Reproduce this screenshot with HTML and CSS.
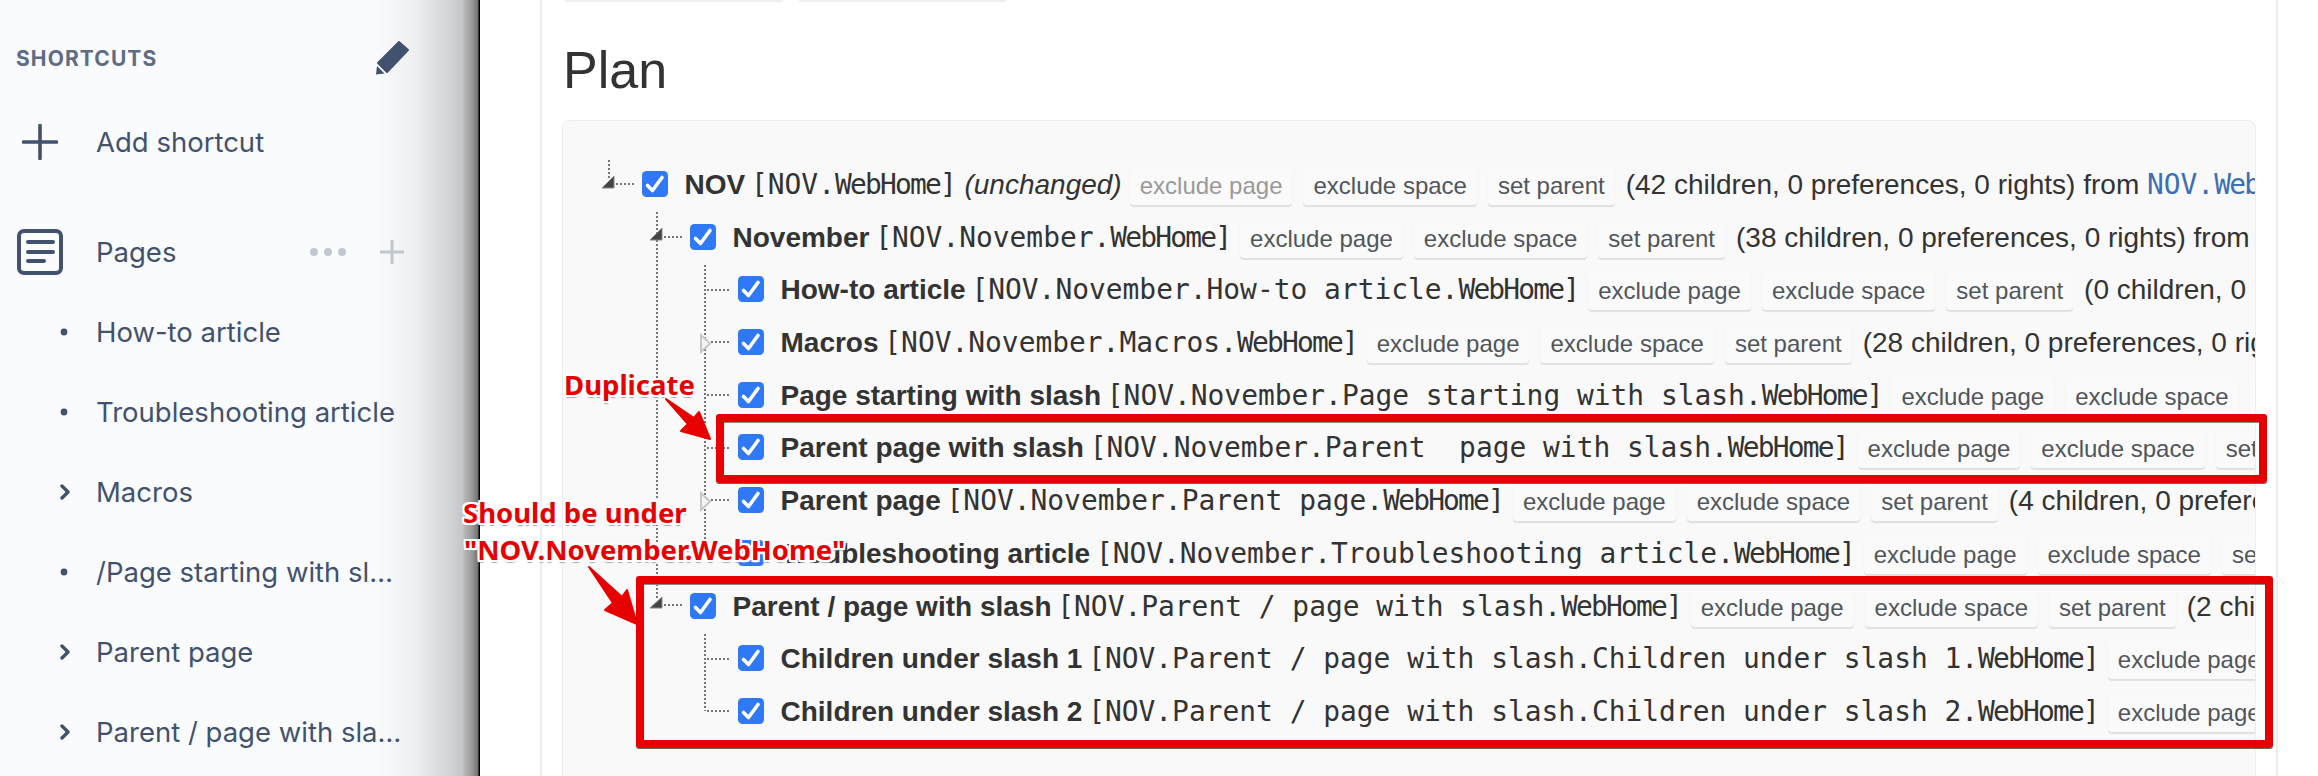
FILE: index.html
```html
<!DOCTYPE html>
<html lang="en">
<head>
<meta charset="utf-8">
<title>Plan</title>
<link rel="stylesheet" href="styles.css">
</head>
<body>
<svg class="defs" width="0" height="0" aria-hidden="true">
  <symbol id="checkbox" viewBox="0 0 26 26">
    <rect width="26" height="26" rx="4.5" fill="#2f78f6"/>
    <path d="M5.5 14.5l5 5L20 6.5" fill="none" stroke="#fff" stroke-width="3.6" stroke-linecap="round" stroke-linejoin="round"/>
  </symbol>
  <symbol id="chevron" viewBox="0 0 10 16">
    <path d="M2 2l6 6-6 6" fill="none" stroke="currentColor" stroke-width="3.4" stroke-linecap="round" stroke-linejoin="round"/>
  </symbol>
  <symbol id="bullet" viewBox="0 0 10 16">
    <circle cx="4" cy="8" r="3.4" fill="currentColor"/>
  </symbol>
</svg>

<div class="app">
  <aside class="sidebar">
    <div class="side-head">
      <span class="side-title">SHORTCUTS</span>
      <svg class="pencil" width="34" height="35" viewBox="0 0 34 35">
        <path d="M23 2l9 8-21 22-9-9z" fill="#42526e" stroke="#42526e" stroke-width="2" stroke-linejoin="round"/>
        <path d="M1 26l7.500 7.500L0 34.500z" fill="#42526e"/>
      </svg>
    </div>
    <div class="nav-row">
      <span class="nav-icon">
        <svg width="36" height="36" viewBox="0 0 36 36"><path d="M18 1.500v33M1.500 18h33" fill="none" stroke="#42526e" stroke-width="3.600" stroke-linecap="round"/></svg>
      </span>
      <span>Add shortcut</span>
    </div>
    <div class="nav-row nav-pages">
      <span class="nav-icon">
        <svg width="46" height="46" viewBox="0 0 46 46">
          <rect x="2" y="2" width="42" height="42" rx="5" fill="none" stroke="#42526e" stroke-width="4"/>
          <path d="M11 13h25M11 23h25M11 32h16" fill="none" stroke="#42526e" stroke-width="4" stroke-linecap="round"/>
        </svg>
      </span>
      <span>Pages</span>
      <span class="page-tools">
        <svg width="36" height="8" viewBox="0 0 36 8"><circle cx="4" cy="4" r="4" fill="#c1c7d0"/><circle cx="18" cy="4" r="4" fill="#c1c7d0"/><circle cx="32" cy="4" r="4" fill="#c1c7d0"/></svg>
        <svg width="24" height="24" viewBox="0 0 24 24"><path d="M12 1v22M1 12h22" fill="none" stroke="#c1c7d0" stroke-width="3" stroke-linecap="round"/></svg>
      </span>
    </div>
    <ul class="page-list">
      <li class="page-item"><svg class="tw"><use href="#bullet"/></svg>How-to article</li>
      <li class="page-item"><svg class="tw"><use href="#bullet"/></svg>Troubleshooting article</li>
      <li class="page-item"><svg class="tw"><use href="#chevron"/></svg>Macros</li>
      <li class="page-item"><svg class="tw"><use href="#bullet"/></svg>/Page starting with sl…</li>
      <li class="page-item"><svg class="tw"><use href="#chevron"/></svg>Parent page</li>
      <li class="page-item"><svg class="tw"><use href="#chevron"/></svg>Parent / page with sla…</li>
    </ul>
  </aside>

  <main class="main">
    <div class="content">
      <div class="top-actions"><span class="top-a"></span><span class="top-b"></span></div>
      <h1 class="plan-title">Plan</h1>
      <section class="plan">
        <svg class="tree-lines" width="300" height="655" viewBox="563 121 300 655">
          <g class="dots">
            <path d="M609 160v20M616 184h18"/>
            <path d="M657 212v386M664 237h18M664 605h18"/>
            <path d="M705 265v288M707 290h23M707 342h23M707 395h23M707 448h23M707 500h23M707 553h23"/>
            <path d="M705 634v77M707 659h23M707 711h23"/>
          </g>
          <path class="tri" d="M602 188h12v-12z"/>
          <path class="tri" d="M650 240h12v-12z"/>
          <path class="tri" d="M650 608h12v-11z"/>
          <path class="tri-open" d="M701 335l9 8.500-9 8.500z"/>
          <path class="tri-open" d="M701 493l9 8.500-9 8.500z"/>
        </svg>
        <ul class="tree">
          <li class="row lvl-0">
            <svg class="check"><use href="#checkbox"/></svg>
            <span class="label"><b>NOV</b> <code>[NOV.<span class="tight">WebHome</span>]</code> <i>(unchanged)</i></span>
            <span class="action off">exclude page</span><span class="action">exclude space</span><span class="action">set parent</span>
            <span class="meta">(42 children, 0 preferences, 0 rights) from <code class="link">NOV.<span class="tight">WebHome</span></code></span>
          </li>
          <li class="row lvl-1">
            <svg class="check"><use href="#checkbox"/></svg>
            <span class="label"><b>November</b> <code>[NOV.November.<span class="tight">WebHome</span>]</code></span>
            <span class="action">exclude page</span><span class="action">exclude space</span><span class="action">set parent</span>
            <span class="meta">(38 children, 0 preferences, 0 rights) from <code class="link">NOV.<span class="tight">WebHome</span></code></span>
          </li>
          <li class="row lvl-2">
            <svg class="check"><use href="#checkbox"/></svg>
            <span class="label"><b>How-to article</b> <code>[NOV.November.How-to article.<span class="tight">WebHome</span>]</code></span>
            <span class="action">exclude page</span><span class="action">exclude space</span><span class="action">set parent</span>
            <span class="meta">(0 children, 0 preferences, 0 rights)</span>
          </li>
          <li class="row lvl-2">
            <svg class="check"><use href="#checkbox"/></svg>
            <span class="label"><b>Macros</b> <code>[NOV.November.Macros.<span class="tight">WebHome</span>]</code></span>
            <span class="action">exclude page</span><span class="action">exclude space</span><span class="action">set parent</span>
            <span class="meta">(28 children, 0 preferences, 0 rights)</span>
          </li>
          <li class="row lvl-2">
            <svg class="check"><use href="#checkbox"/></svg>
            <span class="label"><b>Page starting with slash</b> <code>[NOV.November.Page starting with slash.<span class="tight">WebHome</span>]</code></span>
            <span class="action">exclude page</span><span class="action">exclude space</span><span class="action">set parent</span>
          </li>
          <li class="row lvl-2">
            <svg class="check"><use href="#checkbox"/></svg>
            <span class="label"><b>Parent page with slash</b> <code>[NOV.November.Parent  page with slash.<span class="tight">WebHome</span>]</code></span>
            <span class="action">exclude page</span><span class="action">exclude space</span><span class="action">set parent</span>
          </li>
          <li class="row lvl-2">
            <svg class="check"><use href="#checkbox"/></svg>
            <span class="label"><b>Parent page</b> <code>[NOV.November.Parent page.<span class="tight">WebHome</span>]</code></span>
            <span class="action">exclude page</span><span class="action">exclude space</span><span class="action">set parent</span>
            <span class="meta">(4 children, 0 preferences, 0 rights)</span>
          </li>
          <li class="row lvl-2">
            <svg class="check"><use href="#checkbox"/></svg>
            <span class="label"><b>Troubleshooting article</b> <code>[NOV.November.Troubleshooting article.<span class="tight">WebHome</span>]</code></span>
            <span class="action">exclude page</span><span class="action">exclude space</span><span class="action">set parent</span>
          </li>
          <li class="row lvl-1">
            <svg class="check"><use href="#checkbox"/></svg>
            <span class="label"><b>Parent / page with slash</b> <code>[NOV.Parent / page with slash.<span class="tight">WebHome</span>]</code></span>
            <span class="action">exclude page</span><span class="action">exclude space</span><span class="action">set parent</span>
            <span class="meta">(2 children, 0 preferences, 0 rights)</span>
          </li>
          <li class="row lvl-2">
            <svg class="check"><use href="#checkbox"/></svg>
            <span class="label"><b>Children under slash 1</b> <code>[NOV.Parent / page with slash.Children under slash 1.<span class="tight">WebHome</span>]</code></span>
            <span class="action">exclude page</span>
          </li>
          <li class="row lvl-2">
            <svg class="check"><use href="#checkbox"/></svg>
            <span class="label"><b>Children under slash 2</b> <code>[NOV.Parent / page with slash.Children under slash 2.<span class="tight">WebHome</span>]</code></span>
            <span class="action">exclude page</span>
          </li>
        </ul>
      </section>
    </div>
  </main>
</div>

<div class="marks">
  <div class="mark-box box-duplicate"></div>
  <div class="mark-box box-moved"></div>
  <svg class="mark-arrows" width="2318" height="776" viewBox="0 0 2318 776">
    <path d="M666 399L694 418 699 412 710 439 681 431 688 424z"/>
    <path d="M589 567L622 597 627 590 637 624 605 610 613 603z"/>
  </svg>
  <span class="mark-text text-duplicate">Duplicate</span>
  <span class="mark-text text-should">Should be under</span>
  <span class="mark-text text-target">"NOV.November.WebHome"</span>
</div>
</body>
</html>
```
FILE: styles.css
```css
* { box-sizing: border-box; }
html, body { margin: 0; height: 776px; overflow: hidden; background: #fff; }
body { position: relative; font-family: "Liberation Sans", Arial, sans-serif; color: #333; }
.defs { position: absolute; }
ul { list-style: none; margin: 0; padding: 0; }

.app { display: flex; height: 776px; }

/* Sidebar */
.sidebar {
  flex: 0 0 480px;
  padding-top: 38px;
  font-family: Inter, "Liberation Sans", sans-serif;
  font-size: 27.5px;
  color: #42526e;
  background: linear-gradient(90deg, #fafbfd 375px, #eeeff1 415px, #d2d3d5 450px, #c4c5c6 463px, #b4b4b4 465px, #9a9a9a 472px, #707070 478px, #000 479px);
}
.side-head { display: flex; align-items: center; justify-content: space-between; height: 40px; padding: 0 70px 0 16px; margin-bottom: 24px; }
.side-title { font-size: 21px; font-weight: 700; letter-spacing: 1.1px; color: #5e6c84; }
.pencil { display: block; margin-top: -2px; }
.nav-row { display: flex; align-items: center; height: 80px; padding-left: 17px; }
.nav-icon { flex: 0 0 46px; display: flex; justify-content: center; margin-right: 33px; }
.nav-pages { margin-top: 30px; padding-right: 76px; }
.page-tools { margin-left: auto; display: flex; align-items: center; gap: 34px; }
.page-item { display: flex; align-items: center; height: 80px; padding-left: 60px; white-space: nowrap; }
.tw { flex: 0 0 10px; width: 10px; height: 16px; margin-right: 26px; color: #42526e; }

/* Main */
.main { flex: 1; padding-left: 60px; min-width: 0; }
.content { display: flex; flex-direction: column; width: 1738px; height: 776px; padding: 0 20px; border-left: 2px solid #eee; border-right: 2px solid #eee; }
.top-actions { display: flex; height: 2px; }
.top-a { width: 218px; margin-left: 3px; background: #eee; }
.top-b { width: 207px; margin-left: 16px; background: #eee; }
.plan-title { margin: 38px 0 20px 1px; font-size: 52px; line-height: 60px; font-weight: 400; color: #333; }

.plan { position: relative; flex: 1; min-height: 0; overflow: hidden; background: #f9f9f9; border: 1px solid #eee; border-bottom: 0; border-radius: 8px 8px 0 0; }
.tree-lines { position: absolute; left: 0; top: 0; }
.dots path { fill: none; stroke: #777; stroke-width: 2; stroke-dasharray: 2 2; }
.tri { fill: #444; stroke: #888; stroke-width: 1; }
.tri-open { fill: #f4f4f4; stroke: #c8c8c8; stroke-width: 2; }

.tree { padding-top: 41px; }
.row { display: flex; align-items: baseline; height: 52.7px; padding-top: 4px; font-size: 28px; white-space: nowrap; }
.lvl-0 { padding-left: 79px; }
.lvl-1 { padding-left: 127px; }
.lvl-2 { padding-left: 175px; }
.check { flex: 0 0 26px; width: 26px; height: 26px; align-self: flex-start; margin: 5px 16.5px 0 0; }
.label, .meta, .action { flex: none; }
code { font-family: "DejaVu Sans Mono", "Liberation Mono", monospace; font-size: 27.9px; white-space: pre; }
.label code { margin-left: -2px; }
.tight { letter-spacing: -1.8px; }
.link { color: #3d6fb4; }
.action {
  margin-left: 11px;
  height: 39px;
  padding: 5px 10px 4px;
  font-size: 24px;
  line-height: 30px;
  color: #50565c;
  background: #fafafa;
  border-radius: 4px;
  box-shadow: 0 2px 1px #e0e0e0;
}
.label + .action { margin-left: 8px; }
.action.off { color: #999; }
.meta { margin-left: 11px; }

/* Annotations over the page */
.marks { position: absolute; left: 0; top: 0; width: 2318px; height: 776px; pointer-events: none; }
.mark-box { position: absolute; border: 8px solid #e60000; border-radius: 3px; box-shadow: 0 1px 0 #666, inset 0 1px 0 #888; }
.box-duplicate { left: 716px; top: 414px; width: 1551px; height: 69px; }
.box-moved { left: 636px; top: 576px; width: 1637px; height: 172px; }
.mark-arrows { position: absolute; left: 0; top: 0; }
.mark-arrows path { fill: #e60000; stroke: #e60000; stroke-width: 2; stroke-linejoin: round; }
.mark-text {
  position: absolute;
  font-family: "Noto Sans", "Open Sans", sans-serif;
  font-weight: 700;
  font-size: 27.5px;
  line-height: 36px;
  white-space: nowrap;
  color: #e60000;
  text-shadow: 2px 0 0 #fff, -2px 0 0 #fff, 0 2px 0 #fff, 0 -2px 0 #fff, 2px 2px 0 #fff, -2px 2px 0 #fff, 2px -2px 0 #fff, -2px -2px 0 #fff, 0 3px 1px #aaa;
}
.text-duplicate { left: 564px; top: 367px; }
.text-should { left: 463px; top: 495px; }
.text-target { left: 464px; top: 532px; }
```
